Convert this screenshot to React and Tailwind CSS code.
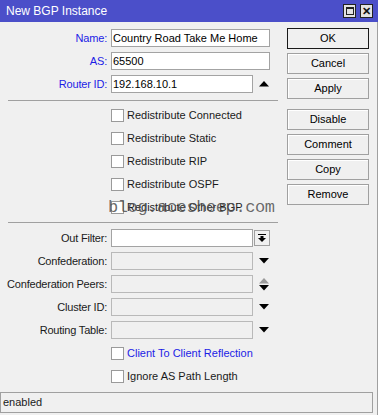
import React from 'react';

const font = { fontFamily: '"Liberation Sans", Arial, sans-serif' };

function Field({ label, blue, value = '', width = 'w-[159px]', disabled, trailing }) {
  return (
    <div className="flex items-center h-[18px]">
      <span className={`w-[107px] text-right text-[11px] leading-none whitespace-nowrap tracking-[-0.2px] ${blue ? 'text-[#1c1ce6]' : 'text-[#1a1a1a]'}`}>{label}</span>
      <div
        className={`ml-[4px] h-[18px] ${width} border flex items-center px-[1px] text-[11px] text-black whitespace-nowrap overflow-hidden ${
          disabled ? 'bg-[#f0f0f0] border-[#b9b9b9]' : 'bg-white border-[#a3a3a3]'
        }`}
      >
        {value}
      </div>
      {trailing}
    </div>
  );
}

function Check({ label, blue }) {
  return (
    <div className="flex items-center h-[23px] pl-[111px]">
      <span className="w-[13px] h-[13px] bg-white border border-[#9a9a9a]" />
      <span className={`ml-[3px] text-[11px] whitespace-nowrap ${blue ? 'text-[#1c1ce6]' : 'text-[#1a1a1a]'}`}>{label}</span>
    </div>
  );
}

const Down = ({ color = '#000' }) => (
  <svg width="10" height="6" viewBox="0 0 10 6"><path d="M0 0H10L5 5.5Z" fill={color} /></svg>
);
const Up = ({ color = '#000' }) => (
  <svg width="10" height="6" viewBox="0 0 10 6"><path d="M0 5.5H10L5 0Z" fill={color} /></svg>
);

function Btn({ children, primary }) {
  return (
    <div
      className={`h-[21px] w-[82px] flex items-center justify-center text-[11px] text-black bg-[#f0f0f0] border ${
        primary ? 'border-[#1a1a1a]' : 'border-[#a0a0a0] shadow-[inset_1px_1px_0_#fff]'
      }`}
    >
      {children}
    </div>
  );
}

export default function App() {
  return (
    <div className="w-[378px] h-[415px] bg-[#f0f0f0] flex flex-col overflow-hidden" style={font}>
      {/* title bar */}
      <div className="h-[22px] bg-[#4b4fc9] flex items-center justify-between pl-[6px] pr-[5px]">
        <span className="text-white text-[12px] leading-none">New BGP Instance</span>
        <div className="flex gap-[4px]">
          <div className="w-[13px] h-[14px] bg-[#e2e2e2] border border-[#222] flex items-center justify-center">
            <div className="w-[8px] h-[8px] border border-[#222] border-t-2" />
          </div>
          <div className="w-[13px] h-[14px] bg-[#e2e2e2] border border-[#222] flex items-center justify-center text-[11px] font-bold leading-none text-[#111]">
            ✕
          </div>
        </div>
      </div>

      <div className="flex-1 flex flex-col border-r border-[#a0a0a0]">
        <div className="flex flex-1">
          {/* left */}
          <div className="w-[280px] pt-[7px] flex flex-col">
            <div className="flex flex-col gap-[5px]">
              <Field label="Name:" blue value="Country Road Take Me Home" />
              <Field label="AS:" blue value="65500" />
              <Field
                label="Router ID:"
                blue
                value="192.168.10.1"
                width="w-[142px]"
                trailing={<span className="ml-[6px] flex"><Up /></span>}
              />
            </div>
            <div className="mt-[7px] ml-[8px] mr-[2px] h-px bg-[#a0a0a0]" />
            <div className="pt-[3px] relative">
              <Check label="Redistribute Connected" />
              <Check label="Redistribute Static" />
              <Check label="Redistribute RIP" />
              <Check label="Redistribute OSPF" />
              <Check label="Redistribute Other BGP" />
              <span
                className="absolute left-[108px] top-[98px] text-[17px] leading-none text-[#505050]/85 pointer-events-none whitespace-nowrap tracking-[-0.4px]"
                style={{ fontFamily: '"Liberation Mono", "Courier New", monospace' }}
              >
                blog.acesheep.com
              </span>
            </div>
            <div className="mt-[3px] ml-[8px] mr-[2px] h-px bg-[#a0a0a0]" />
            <div className="mt-[6px] flex flex-col gap-[5px]">
              <Field
                label="Out Filter:"
                width="w-[142px]"
                trailing={
                  <div className="ml-[1px] w-[16px] h-[16px] bg-[#f0f0f0] border border-[#a0a0a0] flex flex-col items-center justify-center gap-[1px]">
                    <div className="w-[8px] h-[1px] bg-black" />
                    <svg width="8" height="6" viewBox="0 0 8 6"><path d="M2.5 0H5.5V2H8L4 6L0 2H2.5Z" fill="#000" /></svg>
                  </div>
                }
              />
              <Field label="Confederation:" disabled width="w-[142px]" trailing={<span className="ml-[6px] flex"><Down /></span>} />
              <Field
                label="Confederation Peers:"
                disabled
                width="w-[142px]"
                trailing={
                  <span className="ml-[6px] flex flex-col gap-[1px]">
                    <Up color="#9a9a9a" />
                    <Down />
                  </span>
                }
              />
              <Field label="Cluster ID:" disabled width="w-[142px]" trailing={<span className="ml-[6px] flex"><Down /></span>} />
              <Field label="Routing Table:" disabled width="w-[142px]" trailing={<span className="ml-[6px] flex"><Down /></span>} />
            </div>
            <div className="mt-[3px]">
              <Check label="Client To Client Reflection" blue />
              <Check label="Ignore AS Path Length" />
            </div>
          </div>

          {/* right buttons */}
          <div className="pl-[7px] pt-[6px] flex flex-col">
            <div className="flex flex-col gap-[4px]">
              <Btn primary>OK</Btn>
              <Btn>Cancel</Btn>
              <Btn>Apply</Btn>
            </div>
            <div className="mt-[10px] flex flex-col gap-[4px]">
              <Btn>Disable</Btn>
              <Btn>Comment</Btn>
              <Btn>Copy</Btn>
              <Btn>Remove</Btn>
            </div>
          </div>
        </div>

        {/* status bar */}
        <div className="h-[21px] mr-[4px] mb-[2px] border border-[#a0a0a0] flex items-center pl-[2px] text-[11px] text-[#1a1a1a]">
          enabled
        </div>
      </div>
    </div>
  );
}
